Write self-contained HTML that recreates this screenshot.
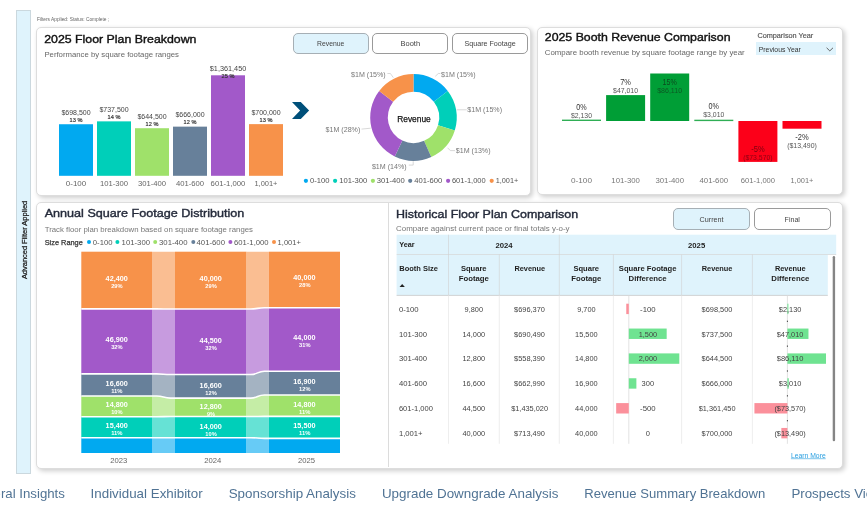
<!DOCTYPE html>
<html lang="en"><head><meta charset="utf-8"><title>Floor Plan Dashboard</title>
<style>
html,body{margin:0;padding:0;background:#fff}
body{width:867px;height:508px;overflow:hidden;position:relative;font-family:"Liberation Sans",sans-serif}
.side{position:absolute;left:16px;top:10px;width:13px;height:462px;background:#DFF3FC;border:0.8px solid #CBD8DE;box-sizing:content-box}
.card{position:absolute;background:#fff;border:1px solid #DDDDDD;border-radius:5px;box-shadow:2px 2px 5px rgba(0,0,0,.2);box-sizing:border-box}
.c1{left:36.3px;top:27px;width:495.2px;height:168.5px}
.c2{left:537.2px;top:27px;width:306.3px;height:167.5px}
.c3{left:36.3px;top:202.2px;width:806.9px;height:266.6px}
.vdiv{position:absolute;left:388px;top:203px;width:1px;height:264px;background:#DCDCDC}
.btn{position:absolute;height:20.5px;border:1px solid #9A9A9A;border-radius:5px;box-sizing:border-box;background:#fff}
.btn.on{background:#DFF3FC;border-color:#A6AFB5}
.dd{position:absolute;left:755.6px;top:42.3px;width:80.3px;height:13.1px;background:#DFF3FC}
svg.gs{will-change:transform}
svg{position:absolute;left:0;top:0;font-family:"Liberation Sans",sans-serif}
</style></head><body>
<div class="side"></div>
<div class="card c1"></div>
<div class="card c2"></div>
<div class="card c3"></div>
<div class="vdiv"></div>
<div class="btn on" style="left:292.7px;top:33.1px;width:76px"></div>
<div class="btn" style="left:372.4px;top:33.1px;width:76px"></div>
<div class="btn" style="left:452.1px;top:33.1px;width:76px"></div>
<div class="btn on" style="left:673.2px;top:208px;width:76.8px;height:21.7px"></div>
<div class="btn" style="left:754px;top:208px;width:76.8px;height:21.7px"></div>
<div class="dd"></div>
<svg class="gs" width="867" height="508" viewBox="0 0 867 508">
<text x="36.9" y="20.8" font-size="5.2" fill="#666" textLength="72.3" lengthAdjust="spacingAndGlyphs">Filters Applied: Status: Complete ;</text>
<g transform="translate(26.8,279.1) rotate(-90)">
<text x="0.0" y="0.0" font-size="7.6" fill="#222" textLength="78.3" lengthAdjust="spacingAndGlyphs" stroke="#222" stroke-width="0.26">Advanced Filter Applied</text>
</g>
<text x="44.2" y="43.2" font-size="11.8" fill="#111" textLength="152.3" lengthAdjust="spacingAndGlyphs" stroke="#111" stroke-width="0.40">2025 Floor Plan Breakdown</text>
<text x="44.4" y="56.7" font-size="8" fill="#666" textLength="134.5" lengthAdjust="spacingAndGlyphs">Performance by square footage ranges</text>
<rect x="59.00" y="124.24" width="34.00" height="51.56" fill="#01A9F0"/>
<text x="61.4" y="114.9" font-size="7" fill="#444" textLength="29.2" lengthAdjust="spacingAndGlyphs">$698,500</text>
<text x="69.6" y="121.9" font-size="5.5" fill="#333" textLength="12.8" lengthAdjust="spacingAndGlyphs" stroke="#333" stroke-width="0.19">13 %</text>
<rect x="97.00" y="121.36" width="34.00" height="54.44" fill="#00CFB9"/>
<text x="99.4" y="112.1" font-size="7" fill="#444" textLength="29.2" lengthAdjust="spacingAndGlyphs">$737,500</text>
<text x="107.6" y="119.1" font-size="5.5" fill="#333" textLength="12.8" lengthAdjust="spacingAndGlyphs" stroke="#333" stroke-width="0.19">14 %</text>
<rect x="135.00" y="128.22" width="34.00" height="47.58" fill="#9FE16A"/>
<text x="137.4" y="118.9" font-size="7" fill="#444" textLength="29.2" lengthAdjust="spacingAndGlyphs">$644,500</text>
<text x="145.6" y="125.9" font-size="5.5" fill="#333" textLength="12.8" lengthAdjust="spacingAndGlyphs" stroke="#333" stroke-width="0.19">12 %</text>
<rect x="173.00" y="126.64" width="34.00" height="49.16" fill="#67809A"/>
<text x="175.4" y="117.3" font-size="7" fill="#444" textLength="29.2" lengthAdjust="spacingAndGlyphs">$666,000</text>
<text x="183.6" y="124.3" font-size="5.5" fill="#333" textLength="12.8" lengthAdjust="spacingAndGlyphs" stroke="#333" stroke-width="0.19">12 %</text>
<rect x="211.00" y="75.30" width="34.00" height="100.50" fill="#A259C9"/>
<text x="209.8" y="71.2" font-size="7" fill="#444" textLength="36.5" lengthAdjust="spacingAndGlyphs">$1,361,450</text>
<text x="221.6" y="78.2" font-size="5.5" fill="#333" textLength="12.8" lengthAdjust="spacingAndGlyphs" stroke="#333" stroke-width="0.19">25 %</text>
<rect x="249.00" y="124.13" width="34.00" height="51.67" fill="#F7924A"/>
<text x="251.4" y="114.8" font-size="7" fill="#444" textLength="29.2" lengthAdjust="spacingAndGlyphs">$700,000</text>
<text x="259.6" y="121.8" font-size="5.5" fill="#333" textLength="12.8" lengthAdjust="spacingAndGlyphs" stroke="#333" stroke-width="0.19">13 %</text>
<text x="65.8" y="186.0" font-size="7.8" fill="#666" textLength="20.4" lengthAdjust="spacingAndGlyphs">0-100</text>
<text x="99.9" y="186.0" font-size="7.8" fill="#666" textLength="28.2" lengthAdjust="spacingAndGlyphs">101-300</text>
<text x="137.9" y="186.0" font-size="7.8" fill="#666" textLength="28.2" lengthAdjust="spacingAndGlyphs">301-400</text>
<text x="175.9" y="186.0" font-size="7.8" fill="#666" textLength="28.2" lengthAdjust="spacingAndGlyphs">401-600</text>
<text x="210.6" y="186.0" font-size="7.8" fill="#666" textLength="34.8" lengthAdjust="spacingAndGlyphs">601-1,000</text>
<text x="254.4" y="186.0" font-size="7.8" fill="#666" textLength="23.1" lengthAdjust="spacingAndGlyphs">1,001+</text>
<path d="M292 102 L300.8 102 L309.1 110.5 L300.8 118.9 L292 118.9 L300.1 110.5 Z" fill="#00507A"/>
<path d="M413.50 74.10 A43.3 43.3 0 0 1 447.76 90.92 L433.83 101.68 A25.7 25.7 0 0 0 413.50 91.70 Z" fill="#01A9F0"/>
<path d="M447.76 90.92 A43.3 43.3 0 0 1 454.79 130.44 L438.01 125.14 A25.7 25.7 0 0 0 433.83 101.68 Z" fill="#00CFB9"/>
<path d="M454.79 130.44 A43.3 43.3 0 0 1 431.26 156.89 L424.04 140.84 A25.7 25.7 0 0 0 438.01 125.14 Z" fill="#9FE16A"/>
<path d="M431.26 156.89 A43.3 43.3 0 0 1 394.76 156.43 L402.38 140.57 A25.7 25.7 0 0 0 424.04 140.84 Z" fill="#67809A"/>
<path d="M394.76 156.43 A43.3 43.3 0 0 1 379.19 90.99 L393.13 101.72 A25.7 25.7 0 0 0 402.38 140.57 Z" fill="#A259C9"/>
<path d="M379.19 90.99 A43.3 43.3 0 0 1 413.50 74.10 L413.50 91.70 A25.7 25.7 0 0 0 393.13 101.72 Z" fill="#F7924A"/>
<text x="397.2" y="121.6" font-size="9.6" fill="#111" textLength="33.6" lengthAdjust="spacingAndGlyphs" stroke="#111" stroke-width="0.25">Revenue</text>
<text x="441.0" y="76.9" font-size="7" fill="#777" textLength="34.7" lengthAdjust="spacingAndGlyphs">$1M (15%)</text>
<text x="467.3" y="111.9" font-size="7" fill="#777" textLength="34.7" lengthAdjust="spacingAndGlyphs">$1M (15%)</text>
<text x="455.8" y="152.6" font-size="7" fill="#777" textLength="34.7" lengthAdjust="spacingAndGlyphs">$1M (13%)</text>
<text x="371.9" y="168.5" font-size="7" fill="#777" textLength="34.7" lengthAdjust="spacingAndGlyphs">$1M (14%)</text>
<text x="325.6" y="131.6" font-size="7" fill="#777" textLength="34.7" lengthAdjust="spacingAndGlyphs">$1M (28%)</text>
<text x="351.0" y="76.9" font-size="7" fill="#777" textLength="34.7" lengthAdjust="spacingAndGlyphs">$1M (15%)</text>
<path d="M435.3 76.3 L438.3 73.5 L440.4 73.5" fill="none" stroke="#C8C8C8" stroke-width="0.7"/>
<path d="M456.8 109.8 L466.7 109.8" fill="none" stroke="#C8C8C8" stroke-width="0.7"/>
<path d="M447.6 147.8 L450.3 150.6 L455 150.6" fill="none" stroke="#C8C8C8" stroke-width="0.7"/>
<path d="M413.2 161.2 L413.2 165.1 L408.8 165.1" fill="none" stroke="#C8C8C8" stroke-width="0.7"/>
<path d="M370.7 128.2 L361.5 129.1" fill="none" stroke="#C8C8C8" stroke-width="0.7"/>
<path d="M393.4 77.7 L390.4 73.5 L387.4 73.5" fill="none" stroke="#C8C8C8" stroke-width="0.7"/>
<circle cx="305.9" cy="180.8" r="2.1" fill="#01A9F0"/>
<text x="310.1" y="183.3" font-size="7.8" fill="#555" textLength="19.5" lengthAdjust="spacingAndGlyphs">0-100</text>
<circle cx="335.1" cy="180.8" r="2.1" fill="#00CFB9"/>
<text x="339.3" y="183.3" font-size="7.8" fill="#555" textLength="28.0" lengthAdjust="spacingAndGlyphs">101-300</text>
<circle cx="372.9" cy="180.8" r="2.1" fill="#9FE16A"/>
<text x="376.8" y="183.3" font-size="7.8" fill="#555" textLength="28.0" lengthAdjust="spacingAndGlyphs">301-400</text>
<circle cx="410.2" cy="180.8" r="2.1" fill="#67809A"/>
<text x="414.2" y="183.3" font-size="7.8" fill="#555" textLength="28.0" lengthAdjust="spacingAndGlyphs">401-600</text>
<circle cx="448.1" cy="180.8" r="2.1" fill="#A259C9"/>
<text x="451.9" y="183.3" font-size="7.8" fill="#555" textLength="33.8" lengthAdjust="spacingAndGlyphs">601-1,000</text>
<circle cx="491.7" cy="180.8" r="2.1" fill="#F7924A"/>
<text x="495.7" y="183.3" font-size="7.8" fill="#555" textLength="22.6" lengthAdjust="spacingAndGlyphs">1,001+</text>
<text x="317.1" y="46.0" font-size="6.8" fill="#444" textLength="27.3" lengthAdjust="spacingAndGlyphs">Revenue</text>
<text x="400.6" y="46.0" font-size="6.8" fill="#444" textLength="19.5" lengthAdjust="spacingAndGlyphs">Booth</text>
<text x="464.4" y="46.0" font-size="6.8" fill="#444" textLength="51.4" lengthAdjust="spacingAndGlyphs">Square Footage</text>
<text x="544.8" y="40.9" font-size="11.8" fill="#111" textLength="185.7" lengthAdjust="spacingAndGlyphs" stroke="#111" stroke-width="0.40">2025 Booth Revenue Comparison</text>
<text x="544.8" y="54.6" font-size="8" fill="#666" textLength="199.9" lengthAdjust="spacingAndGlyphs">Compare booth revenue by square footage range by year</text>
<text x="757.4" y="38.0" font-size="6.8" fill="#555" textLength="55.9" lengthAdjust="spacingAndGlyphs" stroke="#555" stroke-width="0.15">Comparison Year</text>
<text x="758.8" y="51.6" font-size="7.4" fill="#333" textLength="42.1" lengthAdjust="spacingAndGlyphs">Previous Year</text>
<path d="M826.6 47.8 L829.8 50.9 L833 47.8" fill="none" stroke="#555" stroke-width="0.9"/>
<rect x="562.00" y="119.60" width="39.00" height="1.40" fill="#2FAE55"/>
<rect x="606.10" y="95.10" width="39.00" height="25.90" fill="#009E36"/>
<rect x="650.20" y="73.50" width="39.00" height="47.50" fill="#009E36"/>
<rect x="694.30" y="119.70" width="39.00" height="1.40" fill="#2FAE55"/>
<rect x="738.40" y="121.00" width="39.00" height="40.90" fill="#FC0019"/>
<rect x="782.50" y="121.00" width="39.00" height="7.70" fill="#FC0019"/>
<text x="576.3" y="109.8" font-size="8.3" fill="#333" textLength="10.4" lengthAdjust="spacingAndGlyphs">0%</text>
<text x="571.0" y="117.7" font-size="6.9" fill="#555" textLength="21.0" lengthAdjust="spacingAndGlyphs">$2,130</text>
<text x="620.2" y="84.9" font-size="8.3" fill="#333" textLength="10.7" lengthAdjust="spacingAndGlyphs">7%</text>
<text x="613.1" y="92.8" font-size="6.9" fill="#555" textLength="24.9" lengthAdjust="spacingAndGlyphs">$47,010</text>
<text x="662.6" y="84.9" font-size="8.3" fill="#0A4A1E" textLength="14.2" lengthAdjust="spacingAndGlyphs">15%</text>
<text x="657.2" y="92.8" font-size="6.9" fill="#0B5A24" textLength="24.9" lengthAdjust="spacingAndGlyphs">$86,110</text>
<text x="708.6" y="108.8" font-size="8.3" fill="#333" textLength="10.4" lengthAdjust="spacingAndGlyphs">0%</text>
<text x="703.3" y="116.7" font-size="6.9" fill="#555" textLength="21.0" lengthAdjust="spacingAndGlyphs">$3,010</text>
<text x="751.2" y="152.0" font-size="8.3" fill="#7A0010" textLength="13.4" lengthAdjust="spacingAndGlyphs">-5%</text>
<text x="743.2" y="159.9" font-size="6.9" fill="#8E0013" textLength="29.4" lengthAdjust="spacingAndGlyphs">($73,570)</text>
<text x="795.3" y="139.6" font-size="8.3" fill="#333" textLength="13.4" lengthAdjust="spacingAndGlyphs">-2%</text>
<text x="787.2" y="147.5" font-size="6.9" fill="#555" textLength="29.6" lengthAdjust="spacingAndGlyphs">($13,490)</text>
<text x="571.0" y="182.6" font-size="7.8" fill="#777" textLength="21.0" lengthAdjust="spacingAndGlyphs">0-100</text>
<text x="611.3" y="182.6" font-size="7.8" fill="#777" textLength="28.6" lengthAdjust="spacingAndGlyphs">101-300</text>
<text x="655.4" y="182.6" font-size="7.8" fill="#777" textLength="28.6" lengthAdjust="spacingAndGlyphs">301-400</text>
<text x="699.5" y="182.6" font-size="7.8" fill="#777" textLength="28.6" lengthAdjust="spacingAndGlyphs">401-600</text>
<text x="740.8" y="182.6" font-size="7.8" fill="#777" textLength="34.3" lengthAdjust="spacingAndGlyphs">601-1,000</text>
<text x="790.5" y="182.6" font-size="7.8" fill="#777" textLength="22.9" lengthAdjust="spacingAndGlyphs">1,001+</text>
<text x="44.7" y="217.4" font-size="11.8" fill="#252B3B" textLength="199.6" lengthAdjust="spacingAndGlyphs" stroke="#252B3B" stroke-width="0.40">Annual Square Footage Distribution</text>
<text x="44.7" y="231.8" font-size="7.6" fill="#777" textLength="208.3" lengthAdjust="spacingAndGlyphs">Track floor plan breakdown based on square footage ranges</text>
<text x="44.7" y="244.6" font-size="7.4" fill="#333" textLength="38.1" lengthAdjust="spacingAndGlyphs" stroke="#333" stroke-width="0.25">Size Range</text>
<circle cx="89" cy="242" r="2.0" fill="#01A9F0"/>
<text x="92.8" y="244.6" font-size="7.6" fill="#555" textLength="19.7" lengthAdjust="spacingAndGlyphs">0-100</text>
<circle cx="117.4" cy="242" r="2.0" fill="#00CFB9"/>
<text x="121.6" y="244.6" font-size="7.6" fill="#555" textLength="28.4" lengthAdjust="spacingAndGlyphs">101-300</text>
<circle cx="155.2" cy="242" r="2.0" fill="#9FE16A"/>
<text x="159.0" y="244.6" font-size="7.6" fill="#555" textLength="28.5" lengthAdjust="spacingAndGlyphs">301-400</text>
<circle cx="193.3" cy="242" r="2.0" fill="#67809A"/>
<text x="196.5" y="244.6" font-size="7.6" fill="#555" textLength="28.5" lengthAdjust="spacingAndGlyphs">401-600</text>
<circle cx="230.4" cy="242" r="2.0" fill="#A259C9"/>
<text x="234.0" y="244.6" font-size="7.6" fill="#555" textLength="34.6" lengthAdjust="spacingAndGlyphs">601-1,000</text>
<circle cx="274" cy="242" r="2.0" fill="#F7924A"/>
<text x="277.6" y="244.6" font-size="7.6" fill="#555" textLength="23.3" lengthAdjust="spacingAndGlyphs">1,001+</text>
<path d="M152.0 251.7 L156.6 251.7 C163.5 251.7 163.5 251.7 170.4 251.7 L175.0 251.7 L175.0 309.0 L170.4 309.0 C163.5 309.0 163.5 308.9 156.6 308.9 L152.0 308.9 Z" fill="#F7924A" fill-opacity="0.6"/>
<path d="M152.0 308.9 L156.6 308.9 C163.5 308.9 163.5 309.0 170.4 309.0 L175.0 309.0 L175.0 374.5 L170.4 374.5 C163.5 374.5 163.5 373.9 156.6 373.9 L152.0 373.9 Z" fill="#A259C9" fill-opacity="0.6"/>
<path d="M152.0 373.9 L156.6 373.9 C163.5 373.9 163.5 374.5 170.4 374.5 L175.0 374.5 L175.0 398.1 L170.4 398.1 C163.5 398.1 163.5 396.0 156.6 396.0 L152.0 396.0 Z" fill="#67809A" fill-opacity="0.6"/>
<path d="M152.0 396.0 L156.6 396.0 C163.5 396.0 163.5 398.1 170.4 398.1 L175.0 398.1 L175.0 416.5 L170.4 416.5 C163.5 416.5 163.5 416.7 156.6 416.7 L152.0 416.7 Z" fill="#9FE16A" fill-opacity="0.6"/>
<path d="M152.0 416.7 L156.6 416.7 C163.5 416.7 163.5 416.5 170.4 416.5 L175.0 416.5 L175.0 437.7 L170.4 437.7 C163.5 437.7 163.5 437.8 156.6 437.8 L152.0 437.8 Z" fill="#00CFB9" fill-opacity="0.6"/>
<path d="M152.0 437.8 L156.6 437.8 C163.5 437.8 163.5 437.7 170.4 437.7 L175.0 437.7 L175.0 453.0 L170.4 453.0 C163.5 453.0 163.5 453.0 156.6 453.0 L152.0 453.0 Z" fill="#01A9F0" fill-opacity="0.6"/>
<path d="M246.3 251.7 L250.8 251.7 C257.6 251.7 257.6 251.7 264.4 251.7 L268.9 251.7 L268.9 307.8 L264.4 307.8 C257.6 307.8 257.6 309.0 250.8 309.0 L246.3 309.0 Z" fill="#F7924A" fill-opacity="0.6"/>
<path d="M246.3 309.0 L250.8 309.0 C257.6 309.0 257.6 307.8 264.4 307.8 L268.9 307.8 L268.9 371.2 L264.4 371.2 C257.6 371.2 257.6 374.5 250.8 374.5 L246.3 374.5 Z" fill="#A259C9" fill-opacity="0.6"/>
<path d="M246.3 374.5 L250.8 374.5 C257.6 374.5 257.6 371.2 264.4 371.2 L268.9 371.2 L268.9 395.0 L264.4 395.0 C257.6 395.0 257.6 398.1 250.8 398.1 L246.3 398.1 Z" fill="#67809A" fill-opacity="0.6"/>
<path d="M246.3 398.1 L250.8 398.1 C257.6 398.1 257.6 395.0 264.4 395.0 L268.9 395.0 L268.9 416.4 L264.4 416.4 C257.6 416.4 257.6 416.5 250.8 416.5 L246.3 416.5 Z" fill="#9FE16A" fill-opacity="0.6"/>
<path d="M246.3 416.5 L250.8 416.5 C257.6 416.5 257.6 416.4 264.4 416.4 L268.9 416.4 L268.9 438.4 L264.4 438.4 C257.6 438.4 257.6 437.7 250.8 437.7 L246.3 437.7 Z" fill="#00CFB9" fill-opacity="0.6"/>
<path d="M246.3 437.7 L250.8 437.7 C257.6 437.7 257.6 438.4 264.4 438.4 L268.9 438.4 L268.9 453.0 L264.4 453.0 C257.6 453.0 257.6 453.0 250.8 453.0 L246.3 453.0 Z" fill="#01A9F0" fill-opacity="0.6"/>
<rect x="81.30" y="251.70" width="70.70" height="57.20" fill="#F7924A"/>
<rect x="81.30" y="308.90" width="70.70" height="65.00" fill="#A259C9"/>
<rect x="81.30" y="373.90" width="70.70" height="22.10" fill="#67809A"/>
<rect x="81.30" y="396.00" width="70.70" height="20.70" fill="#9FE16A"/>
<rect x="81.30" y="416.70" width="70.70" height="21.10" fill="#00CFB9"/>
<rect x="81.30" y="437.80" width="70.70" height="15.20" fill="#01A9F0"/>
<rect x="175.00" y="251.70" width="71.30" height="57.30" fill="#F7924A"/>
<rect x="175.00" y="309.00" width="71.30" height="65.50" fill="#A259C9"/>
<rect x="175.00" y="374.50" width="71.30" height="23.60" fill="#67809A"/>
<rect x="175.00" y="398.10" width="71.30" height="18.40" fill="#9FE16A"/>
<rect x="175.00" y="416.50" width="71.30" height="21.20" fill="#00CFB9"/>
<rect x="175.00" y="437.70" width="71.30" height="15.30" fill="#01A9F0"/>
<rect x="268.90" y="251.70" width="71.10" height="56.10" fill="#F7924A"/>
<rect x="268.90" y="307.80" width="71.10" height="63.40" fill="#A259C9"/>
<rect x="268.90" y="371.20" width="71.10" height="23.80" fill="#67809A"/>
<rect x="268.90" y="395.00" width="71.10" height="21.40" fill="#9FE16A"/>
<rect x="268.90" y="416.40" width="71.10" height="22.00" fill="#00CFB9"/>
<rect x="268.90" y="438.40" width="71.10" height="14.60" fill="#01A9F0"/>
<path d="M81.3 308.9 L152.0 308.9 L156.6 308.9 C163.5 308.9 163.5 309.0 170.4 309.0 L246.3 309.0 L250.8 309.0 C257.6 309.0 257.6 307.8 264.4 307.8 L340.0 307.8" fill="none" stroke="#fff" stroke-width="1.6"/>
<path d="M81.3 373.9 L152.0 373.9 L156.6 373.9 C163.5 373.9 163.5 374.5 170.4 374.5 L246.3 374.5 L250.8 374.5 C257.6 374.5 257.6 371.2 264.4 371.2 L340.0 371.2" fill="none" stroke="#fff" stroke-width="1.6"/>
<path d="M81.3 396.0 L152.0 396.0 L156.6 396.0 C163.5 396.0 163.5 398.1 170.4 398.1 L246.3 398.1 L250.8 398.1 C257.6 398.1 257.6 395.0 264.4 395.0 L340.0 395.0" fill="none" stroke="#fff" stroke-width="1.6"/>
<path d="M81.3 416.7 L152.0 416.7 L156.6 416.7 C163.5 416.7 163.5 416.5 170.4 416.5 L246.3 416.5 L250.8 416.5 C257.6 416.5 257.6 416.4 264.4 416.4 L340.0 416.4" fill="none" stroke="#fff" stroke-width="1.6"/>
<path d="M81.3 437.8 L152.0 437.8 L156.6 437.8 C163.5 437.8 163.5 437.7 170.4 437.7 L246.3 437.7 L250.8 437.7 C257.6 437.7 257.6 438.4 264.4 438.4 L340.0 438.4" fill="none" stroke="#fff" stroke-width="1.6"/>
<text x="105.6" y="280.5" font-size="6.8" font-weight="700" fill="#fff" textLength="22.2" lengthAdjust="spacingAndGlyphs">42,400</text>
<text x="111.2" y="287.5" font-size="6.0" font-weight="700" fill="#fff" textLength="11.4" lengthAdjust="spacingAndGlyphs">29%</text>
<text x="105.6" y="341.9" font-size="6.8" font-weight="700" fill="#fff" textLength="22.2" lengthAdjust="spacingAndGlyphs">46,900</text>
<text x="111.2" y="348.9" font-size="6.0" font-weight="700" fill="#fff" textLength="11.4" lengthAdjust="spacingAndGlyphs">32%</text>
<text x="105.6" y="386.0" font-size="6.8" font-weight="700" fill="#fff" textLength="22.2" lengthAdjust="spacingAndGlyphs">16,600</text>
<text x="111.2" y="393.0" font-size="6.0" font-weight="700" fill="#fff" textLength="11.4" lengthAdjust="spacingAndGlyphs">11%</text>
<text x="105.6" y="406.9" font-size="6.8" font-weight="700" fill="#fff" textLength="22.2" lengthAdjust="spacingAndGlyphs">14,800</text>
<text x="111.2" y="413.9" font-size="6.0" font-weight="700" fill="#fff" textLength="11.4" lengthAdjust="spacingAndGlyphs">10%</text>
<text x="105.6" y="427.8" font-size="6.8" font-weight="700" fill="#fff" textLength="22.2" lengthAdjust="spacingAndGlyphs">15,400</text>
<text x="111.2" y="434.8" font-size="6.0" font-weight="700" fill="#fff" textLength="11.4" lengthAdjust="spacingAndGlyphs">11%</text>
<text x="199.6" y="280.5" font-size="6.8" font-weight="700" fill="#fff" textLength="22.2" lengthAdjust="spacingAndGlyphs">40,000</text>
<text x="205.3" y="287.5" font-size="6.0" font-weight="700" fill="#fff" textLength="11.4" lengthAdjust="spacingAndGlyphs">29%</text>
<text x="199.6" y="342.8" font-size="6.8" font-weight="700" fill="#fff" textLength="22.2" lengthAdjust="spacingAndGlyphs">44,500</text>
<text x="205.3" y="349.8" font-size="6.0" font-weight="700" fill="#fff" textLength="11.4" lengthAdjust="spacingAndGlyphs">32%</text>
<text x="199.6" y="387.9" font-size="6.8" font-weight="700" fill="#fff" textLength="22.2" lengthAdjust="spacingAndGlyphs">16,600</text>
<text x="205.3" y="394.9" font-size="6.0" font-weight="700" fill="#fff" textLength="11.4" lengthAdjust="spacingAndGlyphs">12%</text>
<text x="199.6" y="408.5" font-size="6.8" font-weight="700" fill="#fff" textLength="22.2" lengthAdjust="spacingAndGlyphs">12,800</text>
<text x="207.0" y="415.5" font-size="6.0" font-weight="700" fill="#fff" textLength="8.0" lengthAdjust="spacingAndGlyphs">9%</text>
<text x="199.6" y="428.8" font-size="6.8" font-weight="700" fill="#fff" textLength="22.2" lengthAdjust="spacingAndGlyphs">14,000</text>
<text x="205.3" y="435.8" font-size="6.0" font-weight="700" fill="#fff" textLength="11.4" lengthAdjust="spacingAndGlyphs">10%</text>
<text x="293.3" y="279.6" font-size="6.8" font-weight="700" fill="#fff" textLength="22.2" lengthAdjust="spacingAndGlyphs">40,000</text>
<text x="299.1" y="286.6" font-size="6.0" font-weight="700" fill="#fff" textLength="11.4" lengthAdjust="spacingAndGlyphs">28%</text>
<text x="293.3" y="339.6" font-size="6.8" font-weight="700" fill="#fff" textLength="22.2" lengthAdjust="spacingAndGlyphs">44,000</text>
<text x="299.1" y="346.6" font-size="6.0" font-weight="700" fill="#fff" textLength="11.4" lengthAdjust="spacingAndGlyphs">31%</text>
<text x="293.3" y="383.7" font-size="6.8" font-weight="700" fill="#fff" textLength="22.2" lengthAdjust="spacingAndGlyphs">16,900</text>
<text x="299.1" y="390.7" font-size="6.0" font-weight="700" fill="#fff" textLength="11.4" lengthAdjust="spacingAndGlyphs">12%</text>
<text x="293.3" y="406.6" font-size="6.8" font-weight="700" fill="#fff" textLength="22.2" lengthAdjust="spacingAndGlyphs">14,800</text>
<text x="299.1" y="413.6" font-size="6.0" font-weight="700" fill="#fff" textLength="11.4" lengthAdjust="spacingAndGlyphs">11%</text>
<text x="293.3" y="427.8" font-size="6.8" font-weight="700" fill="#fff" textLength="22.2" lengthAdjust="spacingAndGlyphs">15,500</text>
<text x="299.1" y="434.8" font-size="6.0" font-weight="700" fill="#fff" textLength="11.4" lengthAdjust="spacingAndGlyphs">11%</text>
<text x="110.2" y="463.0" font-size="7.8" fill="#666" textLength="17.1" lengthAdjust="spacingAndGlyphs">2023</text>
<text x="204.2" y="463.0" font-size="7.8" fill="#666" textLength="17.1" lengthAdjust="spacingAndGlyphs">2024</text>
<text x="298.0" y="463.0" font-size="7.8" fill="#666" textLength="17.1" lengthAdjust="spacingAndGlyphs">2025</text>
<text x="396.0" y="218.0" font-size="11.8" fill="#252B3B" textLength="182.2" lengthAdjust="spacingAndGlyphs" stroke="#252B3B" stroke-width="0.40">Historical Floor Plan Comparison</text>
<text x="396.0" y="231.3" font-size="7.4" fill="#777" textLength="173.6" lengthAdjust="spacingAndGlyphs">Compare against current pace or final totals y-o-y</text>
<text x="699.6" y="221.9" font-size="6.8" fill="#444" textLength="24.0" lengthAdjust="spacingAndGlyphs">Current</text>
<text x="784.6" y="221.9" font-size="6.8" fill="#444" textLength="15.3" lengthAdjust="spacingAndGlyphs">Final</text>
<rect x="396.60" y="234.70" width="439.60" height="19.80" fill="#DFF3FC"/>
<rect x="396.60" y="254.50" width="431.20" height="40.90" fill="#DFF3FC"/>
<line x1="396.60" y1="254.50" x2="836.20" y2="254.50" stroke="#D0D0D0" stroke-width="0.6"/>
<line x1="396.60" y1="295.40" x2="827.80" y2="295.40" stroke="#C8C8C8" stroke-width="0.8"/>
<line x1="448.50" y1="234.70" x2="448.50" y2="295.40" stroke="#D0D0D0" stroke-width="0.6"/>
<line x1="559.30" y1="234.70" x2="559.30" y2="295.40" stroke="#D0D0D0" stroke-width="0.6"/>
<line x1="499.30" y1="254.50" x2="499.30" y2="295.40" stroke="#D0D0D0" stroke-width="0.6"/>
<line x1="613.40" y1="254.50" x2="613.40" y2="295.40" stroke="#D0D0D0" stroke-width="0.6"/>
<line x1="681.60" y1="254.50" x2="681.60" y2="295.40" stroke="#D0D0D0" stroke-width="0.6"/>
<line x1="752.40" y1="254.50" x2="752.40" y2="295.40" stroke="#D0D0D0" stroke-width="0.6"/>
<line x1="448.50" y1="295.40" x2="448.50" y2="443.80" stroke="#E6E6E6" stroke-width="0.7"/>
<line x1="499.30" y1="295.40" x2="499.30" y2="443.80" stroke="#E6E6E6" stroke-width="0.7"/>
<line x1="559.30" y1="295.40" x2="559.30" y2="443.80" stroke="#E6E6E6" stroke-width="0.7"/>
<line x1="613.40" y1="295.40" x2="613.40" y2="443.80" stroke="#E6E6E6" stroke-width="0.7"/>
<line x1="681.60" y1="295.40" x2="681.60" y2="443.80" stroke="#E6E6E6" stroke-width="0.7"/>
<line x1="752.40" y1="295.40" x2="752.40" y2="443.80" stroke="#E6E6E6" stroke-width="0.7"/>
<text x="399.3" y="246.5" font-size="7" font-weight="700" fill="#1E1E1E" textLength="15.4" lengthAdjust="spacingAndGlyphs">Year</text>
<text x="495.4" y="247.5" font-size="7.2" font-weight="700" fill="#1E1E1E" textLength="17.2" lengthAdjust="spacingAndGlyphs">2024</text>
<text x="688.0" y="247.5" font-size="7.2" font-weight="700" fill="#1E1E1E" textLength="17.2" lengthAdjust="spacingAndGlyphs">2025</text>
<text x="399.3" y="270.9" font-size="7" font-weight="700" fill="#1E1E1E" textLength="38.7" lengthAdjust="spacingAndGlyphs">Booth Size</text>
<path d="M399.6 287 L402.2 284 L404.8 287 Z" fill="#222"/>
<text x="460.9" y="270.9" font-size="7" font-weight="700" fill="#1E1E1E" textLength="25.7" lengthAdjust="spacingAndGlyphs">Square</text>
<text x="458.7" y="280.7" font-size="7" font-weight="700" fill="#1E1E1E" textLength="30.2" lengthAdjust="spacingAndGlyphs">Footage</text>
<text x="514.4" y="270.9" font-size="7" font-weight="700" fill="#1E1E1E" textLength="30.8" lengthAdjust="spacingAndGlyphs">Revenue</text>
<text x="573.4" y="270.9" font-size="7" font-weight="700" fill="#1E1E1E" textLength="25.7" lengthAdjust="spacingAndGlyphs">Square</text>
<text x="571.2" y="280.7" font-size="7" font-weight="700" fill="#1E1E1E" textLength="30.2" lengthAdjust="spacingAndGlyphs">Footage</text>
<text x="618.8" y="270.9" font-size="7" font-weight="700" fill="#1E1E1E" textLength="57.7" lengthAdjust="spacingAndGlyphs">Square Footage</text>
<text x="628.6" y="280.7" font-size="7" font-weight="700" fill="#1E1E1E" textLength="38.0" lengthAdjust="spacingAndGlyphs">Difference</text>
<text x="701.7" y="270.9" font-size="7" font-weight="700" fill="#1E1E1E" textLength="30.8" lengthAdjust="spacingAndGlyphs">Revenue</text>
<text x="774.9" y="270.9" font-size="7" font-weight="700" fill="#1E1E1E" textLength="30.8" lengthAdjust="spacingAndGlyphs">Revenue</text>
<text x="771.3" y="280.7" font-size="7" font-weight="700" fill="#1E1E1E" textLength="38.0" lengthAdjust="spacingAndGlyphs">Difference</text>
<line x1="628.80" y1="295.40" x2="628.80" y2="443.80" stroke="#DADADA" stroke-width="0.8"/>
<line x1="787.40" y1="295.40" x2="787.40" y2="443.80" stroke="#DADADA" stroke-width="0.8"/>
<rect x="626.27" y="303.70" width="2.52" height="10.40" fill="#FB909B"/>
<rect x="787.40" y="303.70" width="1.00" height="10.40" fill="#6FE391"/>
<rect x="628.80" y="328.55" width="37.88" height="10.40" fill="#6FE391"/>
<rect x="787.40" y="328.55" width="21.07" height="10.40" fill="#6FE391"/>
<rect x="628.80" y="353.40" width="50.50" height="10.40" fill="#6FE391"/>
<rect x="787.40" y="353.40" width="38.60" height="10.40" fill="#6FE391"/>
<rect x="628.80" y="378.25" width="7.58" height="10.40" fill="#6FE391"/>
<rect x="787.40" y="378.25" width="1.35" height="10.40" fill="#6FE391"/>
<rect x="616.17" y="403.10" width="12.62" height="10.40" fill="#FB909B"/>
<rect x="754.42" y="403.10" width="32.98" height="10.40" fill="#FB909B"/>
<rect x="781.35" y="427.95" width="6.05" height="10.40" fill="#FB909B"/>
<rect x="786.90" y="320.70" width="1.00" height="1.20" fill="#333"/>
<rect x="786.90" y="345.55" width="1.00" height="1.20" fill="#333"/>
<rect x="786.90" y="370.40" width="1.00" height="1.20" fill="#333"/>
<rect x="786.90" y="395.25" width="1.00" height="1.20" fill="#333"/>
<rect x="786.90" y="420.10" width="1.00" height="1.20" fill="#333"/>
<text x="398.9" y="311.6" font-size="7.6" fill="#444" textLength="19.8" lengthAdjust="spacingAndGlyphs">0-100</text>
<text x="464.6" y="311.6" font-size="7.6" fill="#444" textLength="18.4" lengthAdjust="spacingAndGlyphs">9,800</text>
<text x="514.1" y="311.6" font-size="7.6" fill="#444" textLength="30.9" lengthAdjust="spacingAndGlyphs">$696,370</text>
<text x="577.2" y="311.6" font-size="7.6" fill="#444" textLength="18.4" lengthAdjust="spacingAndGlyphs">9,700</text>
<text x="640.1" y="311.6" font-size="7.6" fill="#444" textLength="15.6" lengthAdjust="spacingAndGlyphs">-100</text>
<text x="701.6" y="311.6" font-size="7.6" fill="#444" textLength="30.9" lengthAdjust="spacingAndGlyphs">$698,500</text>
<text x="778.8" y="311.6" font-size="7.6" fill="#444" textLength="22.6" lengthAdjust="spacingAndGlyphs">$2,130</text>
<text x="398.9" y="336.5" font-size="7.6" fill="#444" textLength="28.2" lengthAdjust="spacingAndGlyphs">101-300</text>
<text x="462.5" y="336.5" font-size="7.6" fill="#444" textLength="22.6" lengthAdjust="spacingAndGlyphs">14,000</text>
<text x="514.1" y="336.5" font-size="7.6" fill="#444" textLength="30.9" lengthAdjust="spacingAndGlyphs">$690,490</text>
<text x="575.1" y="336.5" font-size="7.6" fill="#444" textLength="22.6" lengthAdjust="spacingAndGlyphs">15,500</text>
<text x="638.7" y="336.5" font-size="7.6" fill="#444" textLength="18.4" lengthAdjust="spacingAndGlyphs">1,500</text>
<text x="701.6" y="336.5" font-size="7.6" fill="#444" textLength="30.9" lengthAdjust="spacingAndGlyphs">$737,500</text>
<text x="776.7" y="336.5" font-size="7.6" fill="#444" textLength="26.7" lengthAdjust="spacingAndGlyphs">$47,010</text>
<text x="398.9" y="361.3" font-size="7.6" fill="#444" textLength="28.2" lengthAdjust="spacingAndGlyphs">301-400</text>
<text x="462.5" y="361.3" font-size="7.6" fill="#444" textLength="22.6" lengthAdjust="spacingAndGlyphs">12,800</text>
<text x="514.1" y="361.3" font-size="7.6" fill="#444" textLength="30.9" lengthAdjust="spacingAndGlyphs">$558,390</text>
<text x="575.1" y="361.3" font-size="7.6" fill="#444" textLength="22.6" lengthAdjust="spacingAndGlyphs">14,800</text>
<text x="638.7" y="361.3" font-size="7.6" fill="#444" textLength="18.4" lengthAdjust="spacingAndGlyphs">2,000</text>
<text x="701.6" y="361.3" font-size="7.6" fill="#444" textLength="30.9" lengthAdjust="spacingAndGlyphs">$644,500</text>
<text x="776.7" y="361.3" font-size="7.6" fill="#444" textLength="26.7" lengthAdjust="spacingAndGlyphs">$86,110</text>
<text x="398.9" y="386.2" font-size="7.6" fill="#444" textLength="28.2" lengthAdjust="spacingAndGlyphs">401-600</text>
<text x="462.5" y="386.2" font-size="7.6" fill="#444" textLength="22.6" lengthAdjust="spacingAndGlyphs">16,600</text>
<text x="514.1" y="386.2" font-size="7.6" fill="#444" textLength="30.9" lengthAdjust="spacingAndGlyphs">$662,990</text>
<text x="575.1" y="386.2" font-size="7.6" fill="#444" textLength="22.6" lengthAdjust="spacingAndGlyphs">16,900</text>
<text x="641.6" y="386.2" font-size="7.6" fill="#444" textLength="12.5" lengthAdjust="spacingAndGlyphs">300</text>
<text x="701.6" y="386.2" font-size="7.6" fill="#444" textLength="30.9" lengthAdjust="spacingAndGlyphs">$666,000</text>
<text x="778.8" y="386.2" font-size="7.6" fill="#444" textLength="22.6" lengthAdjust="spacingAndGlyphs">$3,010</text>
<text x="398.9" y="411.0" font-size="7.6" fill="#444" textLength="34.0" lengthAdjust="spacingAndGlyphs">601-1,000</text>
<text x="462.5" y="411.0" font-size="7.6" fill="#444" textLength="22.6" lengthAdjust="spacingAndGlyphs">44,500</text>
<text x="511.2" y="411.0" font-size="7.6" fill="#444" textLength="36.8" lengthAdjust="spacingAndGlyphs">$1,435,020</text>
<text x="575.1" y="411.0" font-size="7.6" fill="#444" textLength="22.6" lengthAdjust="spacingAndGlyphs">44,000</text>
<text x="640.1" y="411.0" font-size="7.6" fill="#444" textLength="15.6" lengthAdjust="spacingAndGlyphs">-500</text>
<text x="698.7" y="411.0" font-size="7.6" fill="#444" textLength="36.8" lengthAdjust="spacingAndGlyphs">$1,361,450</text>
<text x="774.4" y="411.0" font-size="7.6" fill="#444" textLength="31.4" lengthAdjust="spacingAndGlyphs">($73,570)</text>
<text x="398.9" y="435.9" font-size="7.6" fill="#444" textLength="23.7" lengthAdjust="spacingAndGlyphs">1,001+</text>
<text x="462.5" y="435.9" font-size="7.6" fill="#444" textLength="22.6" lengthAdjust="spacingAndGlyphs">40,000</text>
<text x="514.1" y="435.9" font-size="7.6" fill="#444" textLength="30.9" lengthAdjust="spacingAndGlyphs">$713,490</text>
<text x="575.1" y="435.9" font-size="7.6" fill="#444" textLength="22.6" lengthAdjust="spacingAndGlyphs">40,000</text>
<text x="645.8" y="435.9" font-size="7.6" fill="#444" textLength="4.2" lengthAdjust="spacingAndGlyphs">0</text>
<text x="701.6" y="435.9" font-size="7.6" fill="#444" textLength="30.9" lengthAdjust="spacingAndGlyphs">$700,000</text>
<text x="774.4" y="435.9" font-size="7.6" fill="#444" textLength="31.4" lengthAdjust="spacingAndGlyphs">($13,490)</text>
<rect x="832.70" y="256.00" width="2.40" height="185.20" fill="#858585" rx="1.2"/>
<text x="790.9" y="457.9" font-size="6.4" fill="#2A9FE0" textLength="34.8" lengthAdjust="spacingAndGlyphs">Learn More</text>
<line x1="790.90" y1="458.70" x2="825.70" y2="458.70" stroke="#2A9FE0" stroke-width="0.6"/>
</svg>
<svg class="tabs" width="867" height="508" viewBox="0 0 867 508">
<clipPath id="tc"><rect x="0.7" y="478" width="120" height="30"/></clipPath>
<text x="-31.4" y="498.0" font-size="13.2" fill="#507394" textLength="96.3" lengthAdjust="spacingAndGlyphs" clip-path="url(#tc)">General Insights</text>
<text x="90.6" y="498.0" font-size="13.2" fill="#507394" textLength="112.1" lengthAdjust="spacingAndGlyphs">Individual Exhibitor</text>
<text x="228.7" y="498.0" font-size="13.2" fill="#507394" textLength="127.2" lengthAdjust="spacingAndGlyphs">Sponsorship Analysis</text>
<text x="381.9" y="498.0" font-size="13.2" fill="#507394" textLength="176.5" lengthAdjust="spacingAndGlyphs">Upgrade Downgrade Analysis</text>
<text x="584.3" y="498.0" font-size="13.2" fill="#507394" textLength="180.9" lengthAdjust="spacingAndGlyphs">Revenue Summary Breakdown</text>
<text x="791.4" y="498.0" font-size="13.3" fill="#507394">Prospects View</text>
</svg>
</body></html>
